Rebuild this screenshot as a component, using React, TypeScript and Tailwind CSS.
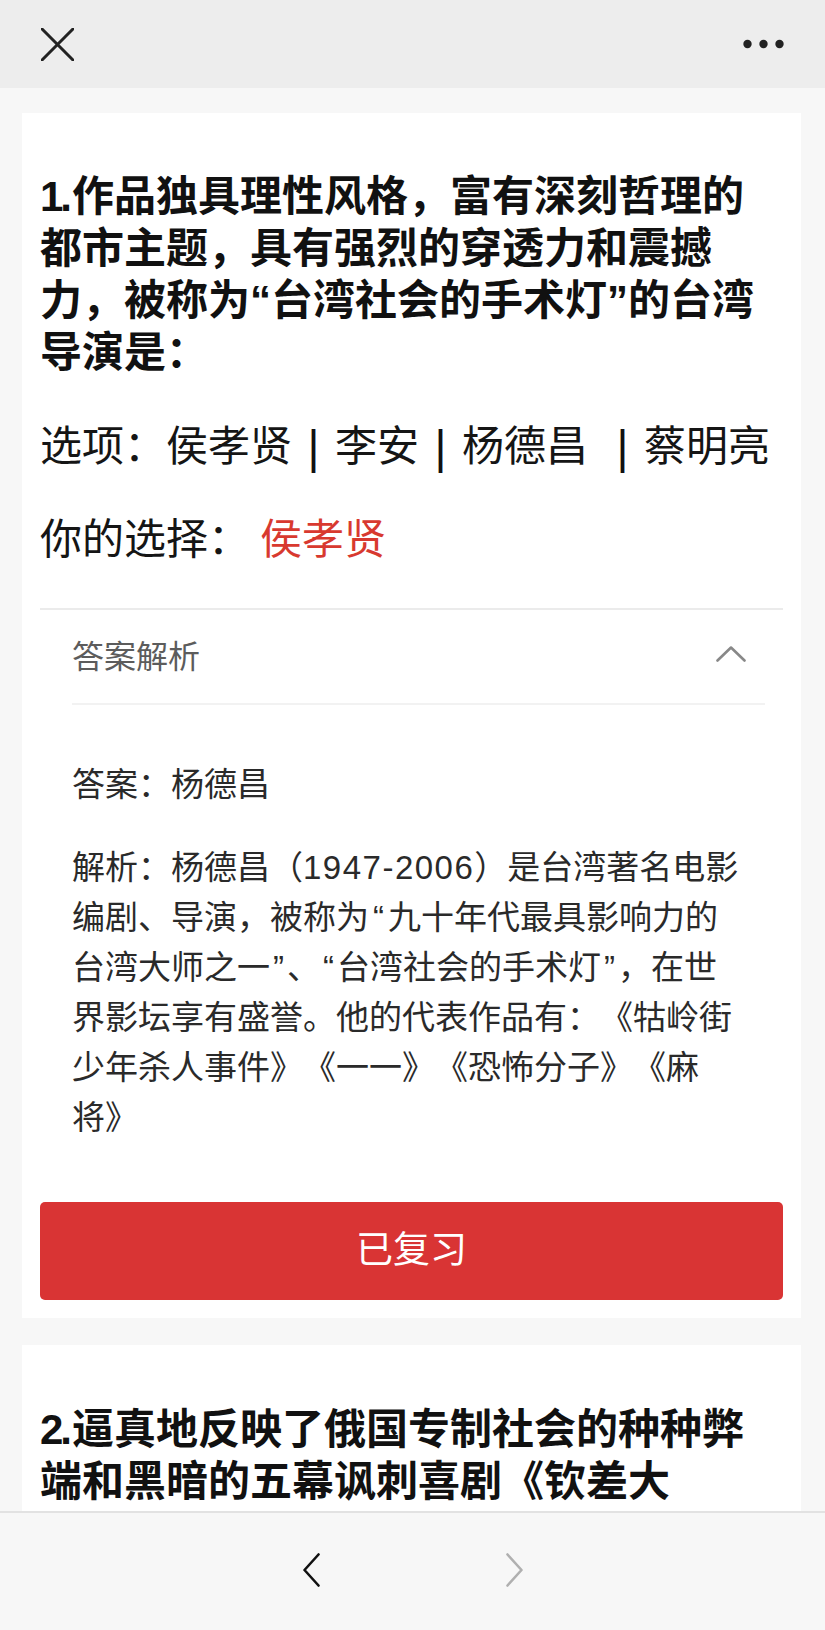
import React from "react";

const FONT = "font-['Liberation_Sans','Noto_Sans_CJK_SC',sans-serif] [text-spacing-trim:space-all]";

function Sep({ extra }: { extra?: boolean }) {
  return (
    <span
      className={`inline-block w-[43px] text-center text-[46px] leading-[52px] align-top text-[#111] ${extra ? "ml-[13px]" : ""}`}
    >
      |
    </span>
  );
}

export default function App() {
  return (
    <div className={`w-[825px] h-[1630px] flex flex-col overflow-hidden bg-[#f7f7f7] ${FONT}`}>
      {/* Top bar */}
      <div className="h-[88px] shrink-0 bg-[#ededed] flex items-center justify-between pl-[41px] pr-[40px]">
        <svg width="33" height="33" viewBox="0 0 33 33">
          <line x1="1" y1="1" x2="32" y2="32" stroke="#222" strokeWidth="3" strokeLinecap="round" />
          <line x1="32" y1="1" x2="1" y2="32" stroke="#222" strokeWidth="3" strokeLinecap="round" />
        </svg>
        <svg width="42" height="10" viewBox="0 0 42 10">
          <circle cx="4.5" cy="5" r="4.2" fill="#222" />
          <circle cx="20.5" cy="5" r="4.2" fill="#222" />
          <circle cx="36.5" cy="5" r="4.2" fill="#222" />
        </svg>
      </div>

      {/* Content */}
      <div className="flex-1 overflow-hidden pt-[25px] pl-[22px] pr-[24px] flex flex-col gap-[27px]">
        {/* Card 1 */}
        <div className="bg-white px-[18px] pt-[58px] pb-[18px] shrink-0">
          <div className="text-[42px] leading-[52px] font-bold text-[#111] whitespace-nowrap">
            <span className="tracking-[-3px] mr-[3px]">1.</span>作品独具理性风格，富有深刻哲理的
            <br />
            都市主题，具有强烈的穿透力和震撼
            <br />
            力，被称为“台湾社会的手术灯”的台湾
            <br />
            导演是：
          </div>
          <div className="mt-[42px] text-[42px] leading-[52px] text-[#151515] whitespace-nowrap">
            <span>选项：</span>
            <span>侯孝贤</span>
            <Sep />
            <span>李安</span>
            <Sep />
            <span>杨德昌</span>
            <Sep extra />
            <span>蔡明亮</span>
          </div>
          <div className="mt-[41px] text-[42px] leading-[52px] text-[#151515] whitespace-nowrap">
            <span>你的选择：</span>
            <span className="ml-[10px] text-[#d8392f]">侯孝贤</span>
          </div>
          <div className="mt-[42px] h-[2px] bg-[#ebebeb]" />
          <div className="ml-[32px] mr-[18px] h-[93px] flex items-center justify-between">
            <span className="text-[32px] text-[#5c5c5c]">答案解析</span>
            <svg width="30" height="16" viewBox="0 0 30 16" className="mr-[19px] mt-[-6px]">
              <polyline points="1.5,14.5 15,1.5 28.5,14.5" fill="none" stroke="#888" strokeWidth="2.6" strokeLinejoin="round" strokeLinecap="round" />
            </svg>
          </div>
          <div className="ml-[32px] mr-[18px] h-[2px] bg-[#f2f2f2]" />
          <div className="pl-[32px] mt-[55px] text-[33px] leading-[50px] text-[#2a2a2a] whitespace-nowrap">
            答案：杨德昌
          </div>
          <div className="pl-[32px] mt-[33px] text-[33px] leading-[50px] text-[#2a2a2a] whitespace-nowrap">
            解析：杨德昌（<span className="tracking-[1.5px]">1947-2006</span>）是台湾著名电影
            <br />
            编剧、导演，被称为<span className="mx-[4px]">“</span>九十年代最具影响力的
            <br />
            台湾大师之一<span className="mx-[3px]">”</span>、<span className="mx-[3px]">“</span>台湾社会的手术灯<span className="mx-[3px]">”</span>，在世
            <br />
            界影坛享有盛誉。他的代表作品有：《牯岭街
            <br />
            少年杀人事件》《一一》《恐怖分子》《麻
            <br />
            将》
          </div>
          <div className="mt-[59px] h-[98px] rounded-[5px] bg-[#d93434] flex items-center justify-center text-white text-[37px]">
            已复习
          </div>
        </div>

        {/* Card 2 */}
        <div className="bg-white px-[18px] pt-[59px] pb-[18px] shrink-0">
          <div className="text-[42px] leading-[52px] font-bold text-[#111] whitespace-nowrap">
            <span className="tracking-[-3px] mr-[3px]">2.</span>逼真地反映了俄国专制社会的种种弊
            <br />
            端和黑暗的五幕讽刺喜剧《钦差大
          </div>
        </div>
      </div>

      {/* Bottom bar */}
      <div className="h-[119px] shrink-0 border-t-2 border-[#e2e2e2] bg-[#f7f7f7] flex justify-center items-start pt-[40px] gap-[186px]">
        <svg width="17" height="34" viewBox="0 0 17 34">
          <polyline points="15.5,1.5 1.5,17 15.5,32.5" fill="none" stroke="#111" strokeWidth="2.6" strokeLinecap="round" strokeLinejoin="round" />
        </svg>
        <svg width="17" height="34" viewBox="0 0 17 34">
          <polyline points="1.5,1.5 15.5,17 1.5,32.5" fill="none" stroke="#b0b0b0" strokeWidth="2.6" strokeLinecap="round" strokeLinejoin="round" />
        </svg>
      </div>
    </div>
  );
}
